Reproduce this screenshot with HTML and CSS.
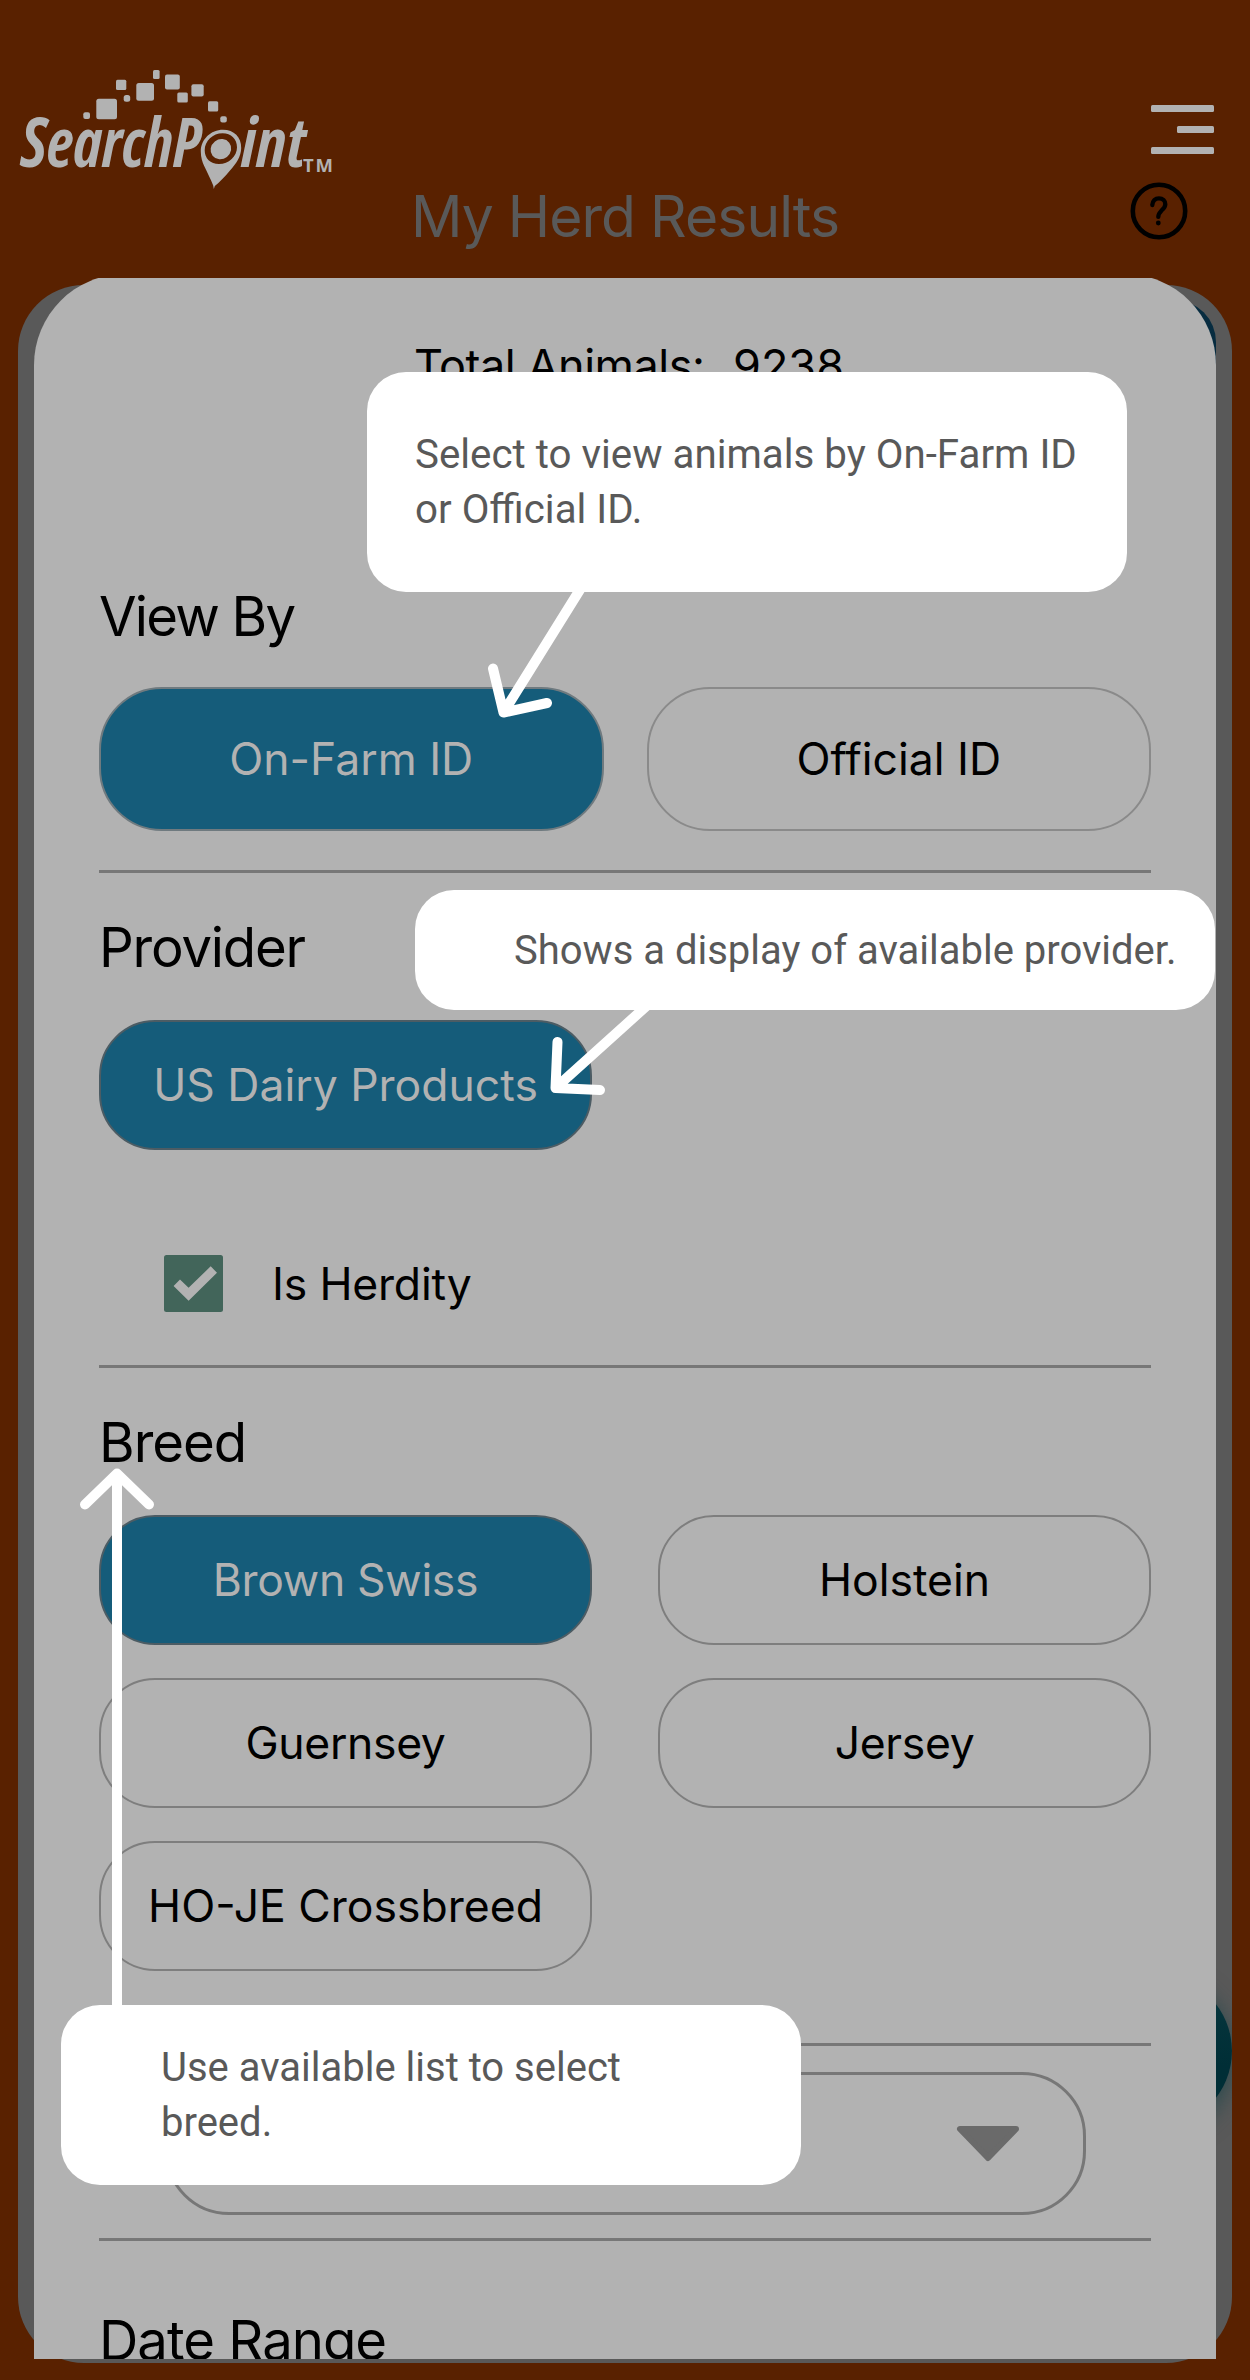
FILE: index.html
```html
<!DOCTYPE html>
<html lang="en">
<head>
<meta charset="utf-8">
<title>My Herd Results</title>
<link rel="stylesheet" href="styles.css">
</head>
<body>
<div class="page">
  <header class="header">
    <div class="topbar">
      <svg class="logo" width="340" height="121" viewBox="0 60 340 121" role="img" aria-label="SearchPoint">
        <g class="logo-fill">
          <rect x="83.3" y="112.3" width="6.7" height="6.7" rx="2"/>
          <rect x="96.3" y="98.7" width="20.7" height="20.5" rx="2.5"/>
          <rect x="116" y="79.8" width="10.3" height="10.3" rx="1.5"/>
          <rect x="123.7" y="95" width="6.5" height="6.7" rx="2.5"/>
          <rect x="136.3" y="83" width="17.7" height="17.8" rx="2.5"/>
          <rect x="153" y="70" width="6.6" height="9" rx="1.5"/>
          <rect x="165" y="74.4" width="14.8" height="15" rx="2"/>
          <rect x="177.3" y="92.4" width="10.5" height="10.2" rx="1.5"/>
          <rect x="191.4" y="84.3" width="12.3" height="12.3" rx="2"/>
          <rect x="208" y="101.3" width="10.2" height="10.3" rx="1.5"/>
          <rect x="220.3" y="116.3" width="6.5" height="6.3" rx="2"/>
          <path fill-rule="evenodd" d="M223 129.8c11 0 18.4 7.500 18.200 18.200c-.2 9-5 15.500-11.200 22.500c-5.500 6.400-10.500 12-15.200 15.500l-1 3l-.6-3.600c-2.600-6.400-6-13-9-19.400c-1.800-4-3.400-8.600-3.400-14.500c0-12 10-21.700 22.200-21.700zM222.600 133.300c-9.800 0-17.900 7.700-17.900 17c0 8.200 5.600 13.800 14.300 13.800c9.800 0 18-7.600 18-16.800c0-8.300-5.800-14-14.400-14z"/>
          <ellipse cx="220.900" cy="149.200" rx="10.600" ry="9.800" transform="rotate(-38 220.900 149.200)"/>
        </g>
        <text class="logo-text" x="21" y="167" textLength="180" lengthAdjust="spacingAndGlyphs">SearchP</text>
        <text class="logo-text" x="241" y="167" textLength="65" lengthAdjust="spacingAndGlyphs">int</text>
        <text class="logo-tm" x="303" y="172" textLength="30" lengthAdjust="spacing">TM</text>
      </svg>
      <svg class="menu" width="63" height="49" viewBox="0 0 63 49">
        <rect x="0" y="0" width="63" height="7" rx="1.500"/>
        <rect x="26" y="21" width="37" height="7" rx="1.500"/>
        <rect x="0" y="42" width="63" height="7" rx="1.500"/>
      </svg>
    </div>
    <div class="titlebar">
      <h1 class="title">My Herd Results</h1>
      <svg class="help" width="58" height="58" viewBox="0 0 58 58">
        <circle cx="29" cy="29" r="26.200" fill="none" stroke="#000" stroke-width="4.600"/>
        <path d="M22.300 23c.3-4.400 3-6.700 6.600-6.700c4 0 6.400 2.500 6.400 5.900c0 3-1.900 4.500-3.900 6.500c-2 2-3.100 3.400-3.100 6.200" fill="none" stroke="#000" stroke-width="4.300" stroke-linecap="round"/>
        <circle cx="28.300" cy="41" r="2.400"/>
      </svg>
    </div>
  </header>

  <main class="card">
    <div class="card-tab"></div>
    <div class="fab"></div>
    <div class="sheet">
      <div class="sheet-body">
        <p class="total"><span class="total-label">Total Animals:</span><span>9238</span></p>

        <h2 class="heading heading-view">View By</h2>
        <div class="toggle">
          <div class="pill on">On-Farm ID</div>
          <div class="pill">Official ID</div>
        </div>
        <hr class="rule rule-view">

        <h2 class="heading heading-provider">Provider</h2>
        <div class="options">
          <div class="pill on">US Dairy Products</div>
        </div>
        <div class="check">
          <svg width="59" height="57" viewBox="0 0 59 57">
            <rect width="59" height="57" rx="2.500" fill="#42655a"/>
            <path d="M9.600 31L16 24.400L24.600 32.800L46.700 11.300L53 17.800L24.600 45.800z" fill="#b2b2b2"/>
          </svg>
          <span>Is Herdity</span>
        </div>
        <hr class="rule">

        <h2 class="heading heading-breed">Breed</h2>
        <div class="options breeds">
          <div class="pill on tight">Brown Swiss</div>
          <div class="pill">Holstein</div>
          <div class="pill tight">Guernsey</div>
          <div class="pill tight">Jersey</div>
          <div class="pill">HO-JE Crossbreed</div>
        </div>
        <hr class="rule rule-breed">

        <div class="select">
          <svg width="64" height="37" viewBox="0 0 64 37"><path d="M4 4H60L32 33z" fill="#6a6a6a" stroke="#6a6a6a" stroke-width="6" stroke-linejoin="round"/></svg>
        </div>
        <hr class="rule rule-select">

        <h2 class="heading heading-date">Date Range</h2>
      </div>
    </div>
  </main>

  <svg class="arrows" width="1250" height="2380" viewBox="0 0 1250 2380">
    <path d="M581 588L503.500 712.500M493 668.500L503.500 712.500L547 703"/>
    <path d="M646.500 1006L555.500 1088M557.500 1042L555.500 1088L600 1090"/>
    <path d="M117 2010V1474M85 1504.500L117 1473.500L149 1504.500"/>
  </svg>
  <div class="tip tip-view">Select to view animals by On-Farm ID<br>or Official ID.</div>
  <div class="tip tip-provider">Shows a display of available provider.</div>
  <div class="tip tip-breed">Use available list to select<br>breed.</div>
</div>
</body>
</html>
```
FILE: styles.css
```css
* { box-sizing: border-box; }

body {
  margin: 0;
  background: #592100;
  font-family: Inter, "Liberation Sans", sans-serif;
  color: #000;
}

h1, h2, p { margin: 0; font-weight: 400; }

.page {
  position: relative;
  width: 1250px;
  height: 2380px;
  overflow: hidden;
}

/* Header */
.header { height: 285px; }

.topbar {
  display: flex;
  justify-content: space-between;
  height: 181px;
}

.logo { margin-top: 60px; overflow: visible; }
.logo-fill { fill: #b2b2b2; }
.logo-text {
  font: italic 700 68px "Open Sans", "Liberation Sans", sans-serif;
  font-stretch: 75%;
  fill: #b2b2b2;
}
.logo-tm {
  font: 700 18.5px "Open Sans", "Liberation Sans", sans-serif;
  fill: #b2b2b2;
}

.menu { margin: 105px 36px 0 0; fill: #b2b2b2; }

.titlebar {
  display: grid;
  grid-template-columns: 1fr auto 1fr;
}
.title {
  grid-column: 2;
  font-size: 57px;
  line-height: 71px;
  letter-spacing: -0.96px;
  color: #595959;
}
.help { justify-self: end; margin: 1px 62px 0 0; }

/* Card behind the sheet */
.card {
  position: relative;
  width: 1214px;
  height: 2078px;
  margin-left: 18px;
  background: #595959;
  border-radius: 66px;
}
.card-tab {
  position: absolute;
  left: 22px;
  top: 15px;
  width: 1176px;
  height: 70px;
  border-radius: 42px 42px 0 0;
  background: linear-gradient(90deg, #333 50%, #072c40 50%);
}
.fab {
  position: absolute;
  right: 0;
  top: 1689px;
  width: 154px;
  height: 154px;
  border-radius: 50%;
  background: linear-gradient(#08383f, #002e36 60%);
  box-shadow: 0 6px 24px rgba(0, 60, 66, 0.6);
  clip-path: inset(-50px 0 -50px 0);
}

/* Sheet */
.sheet {
  position: relative;
  top: -7px;
  width: 1182px;
  height: 2081px;
  margin-left: 16px;
  overflow: hidden;
}
.sheet-body {
  height: 2085px;
  margin-top: -4px;
  padding: 65px 65px 0;
  background: #b2b2b2;
  border-radius: 91px 91px 0 0;
}

.total {
  display: flex;
  margin-left: 315px;
  font-size: 45px;
  line-height: 54px;
}
.total-label { width: 319px; letter-spacing: -0.47px; }

.heading {
  font-size: 54.5px;
  line-height: 66px;
  letter-spacing: -1px;
}
.heading-view { margin-top: 190px; letter-spacing: -1.8px; }
.heading-provider { margin-top: 41px; letter-spacing: -1.2px; }
.heading-breed { margin-top: 40.5px; }
.heading-date { margin-top: 66px; }

.toggle, .options {
  display: grid;
  grid-template-columns: 1fr 1fr;
}
.toggle { gap: 43px; margin-top: 38px; }
.options { column-gap: 66px; row-gap: 33px; margin-top: 40px; }

.pill {
  display: flex;
  align-items: center;
  justify-content: center;
  height: 130px;
  border: 2px solid #7e7e7e;
  border-radius: 56px;
  font-size: 44.5px;
  white-space: nowrap;
}
.toggle .pill { height: 144px; border-color: #8a8a8a; border-radius: 63px; }
.pill.on { background: #155c7a; border-color: #4c5c64; color: #b2b2b2; }
.toggle .pill.on { border-color: #6f7a7f; }
.pill.tight { letter-spacing: -0.33px; }

.rule {
  height: 3px;
  margin: 53px 0 0;
  border: 0;
  background: #777;
}
.rule-view { margin-top: 39px; }
.rule-breed { margin-top: 72px; }
.rule-select { margin-top: 23px; }

.check {
  display: flex;
  align-items: center;
  gap: 49px;
  height: 57px;
  margin: 105px 0 0 65px;
  font-size: 44.5px;
  letter-spacing: -0.19px;
}

.select {
  display: flex;
  align-items: center;
  justify-content: flex-end;
  width: 921px;
  height: 143px;
  margin: 26.5px 0 0 66px;
  padding-right: 63px;
  border: 3px solid #777;
  border-radius: 64px;
}

/* Guided tour overlay */
.arrows {
  position: absolute;
  left: 0;
  top: 0;
  fill: none;
  stroke: #fff;
  stroke-width: 10px;
  stroke-linecap: round;
  stroke-linejoin: round;
}
.tip {
  position: absolute;
  background: #fff;
  border-radius: 39px;
  color: #595959;
  font: 40px/55px Roboto, "Liberation Sans", sans-serif;
  white-space: nowrap;
}
.tip-view { left: 367px; top: 372px; width: 760px; height: 220px; padding: 55px 48px; font-size: 40.3px; }
.tip-provider { left: 415px; top: 890px; width: 800px; height: 120px; padding: 33px 99px; }
.tip-breed { left: 61px; top: 2005px; width: 740px; height: 180px; padding: 35px 100px; }
```
